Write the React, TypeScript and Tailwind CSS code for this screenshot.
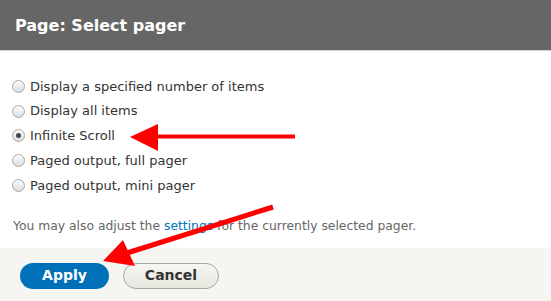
import React from "react";

const options = [
  "Display a specified number of items",
  "Display all items",
  "Infinite Scroll",
  "Paged output, full pager",
  "Paged output, mini pager",
];

function Radio({ checked }: { checked: boolean }) {
  return (
    <span className="relative flex h-[13px] w-[13px] items-center justify-center rounded-full border border-[#a9a9a9] bg-gradient-to-b from-[#fdfdfd] to-[#dcdcdc]">
      {checked && <span className="h-[5px] w-[5px] rounded-full bg-[#444]" />}
    </span>
  );
}

export default function App() {
  return (
    <div
      className="relative h-[301px] w-[551px] overflow-hidden bg-white"
      style={{ fontFamily: '"DejaVu Sans", sans-serif' }}
    >
      <div className="flex h-[51px] items-center border-b border-[#d0d0d0] bg-[#666666] px-[15px] pt-[1px]">
        <h1 className="text-[16px] font-bold text-white">Page: Select pager</h1>
      </div>
      <div className="flex flex-col px-[12px] pt-[23px]">
        {options.map((o, i) => (
          <label key={o} className="flex h-[24.75px] items-center gap-[5px] text-[13px] text-[#333]">
            <Radio checked={i === 2} />
            <span>{o}</span>
          </label>
        ))}
        <p className="mt-[19px] pl-[1px] text-[12.35px] text-[#666]">
          You may also adjust the <a className="text-[#0074bd]">settings</a> for the currently selected pager.
        </p>
      </div>
      <div className="absolute bottom-0 left-0 right-0 flex h-[53px] items-center gap-[14px] bg-[#f5f5f2] px-[20px] pt-[2px]">
        <button className="flex h-[26px] w-[89px] items-center justify-center rounded-full bg-[#0071b8] text-[14px] font-bold text-white">
          Apply
        </button>
        <button className="flex h-[26px] w-[96px] items-center justify-center rounded-full border border-[#a6a6a6] bg-gradient-to-b from-[#f6f6f3] to-[#e7e7df] text-[14px] font-bold text-[#333]">
          Cancel
        </button>
      </div>
      <svg className="pointer-events-none absolute left-0 top-0" width="551" height="301">
        <line x1="157" y1="136.5" x2="295" y2="136.5" stroke="#ff0000" strokeWidth="4" />
        <polygon points="130,137 158,124 158,151" fill="#ff0000" />
        <line x1="127" y1="253" x2="273" y2="207" stroke="#ff0000" strokeWidth="5" />
        <polygon points="103,261 123,240 135,266" fill="#ff0000" />
      </svg>
    </div>
  );
}
